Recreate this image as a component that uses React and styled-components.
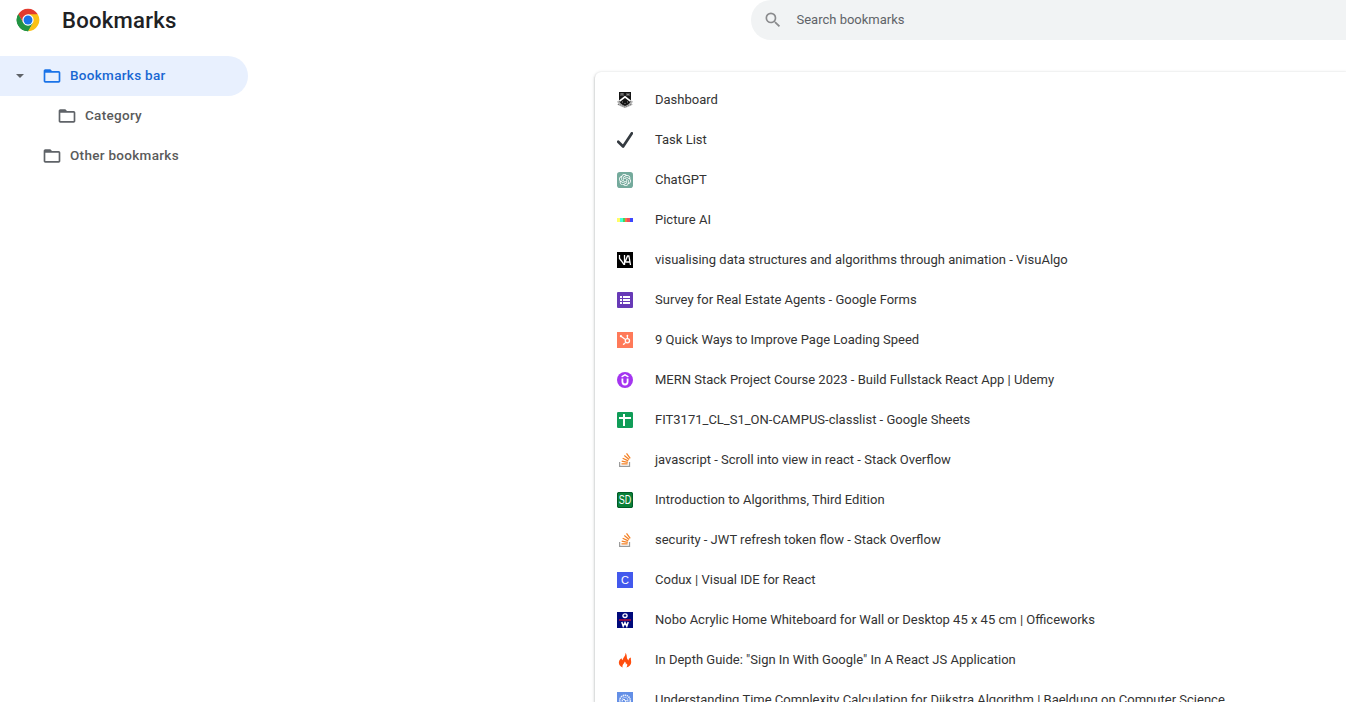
import React from 'react';
import styled, { createGlobalStyle } from 'styled-components';

const GlobalStyle = createGlobalStyle`
  * { box-sizing: border-box; }
  body {
    margin: 0;
    background: #fff;
    color: #202124;
    font-family: Roboto, "Liberation Sans", sans-serif;
    font-size: 13px;
    overflow: hidden;
  }
`;

const Page = styled.div`
  height: 702px;
  display: flex;
  flex-direction: column;
  overflow: hidden;
`;

const Toolbar = styled.header`
  flex: none;
  height: 56px;
  display: flex;
  align-items: flex-start;
`;

const Brand = styled.div`
  width: 751px;
  height: 40px;
  flex: none;
  display: flex;
  align-items: center;
  padding-left: 16px;
  gap: 22px;
`;

const Title = styled.h1`
  margin: 0;
  font-size: 22.1px;
  line-height: 40px;
  font-weight: 500;
  letter-spacing: 0.25px;
  color: #202124;
`;

const SearchField = styled.div`
  flex: 1;
  height: 40px;
  display: flex;
  align-items: center;
  gap: 13.5px;
  padding-left: 12px;
  border-radius: 20px 0 0 20px;
  background: #f1f3f4;
  color: #5f6368;
  line-height: 40px;
`;

const Main = styled.main`
  flex: 1;
  min-height: 0;
  display: flex;
`;

const Sidebar = styled.nav`
  width: 595px;
  flex: none;
`;

const Folder = styled.div`
  width: 248px;
  height: 40px;
  display: flex;
  align-items: center;
  padding-left: ${({ $depth }) => 10 + $depth * 15}px;
  border-radius: 0 20px 20px 0;
  background: ${({ $active }) => ($active ? '#e8f0fe' : 'transparent')};
  color: ${({ $active }) => ($active ? '#1a73e8' : '#5f6368')};
  font-weight: 500;
  font-size: 13.5px;
  letter-spacing: 0.3px;
  line-height: 38px;
`;

const Expander = styled.span`
  width: 32px;
  height: 20px;
  flex: none;
  color: #5f6368;
`;

const FolderName = styled.span`
  padding: 0 0 2px 8px;
  color: ${({ $active }) => ($active ? '#1967d2' : '#5a5a5a')};
`;

const Card = styled.section`
  flex: 1;
  margin-top: 16px;
  padding: 8px 0;
  border-radius: 6px 0 0 0;
  background: #fff;
  box-shadow: 0 1px 2px 0 rgba(60, 64, 67, 0.3), 0 1px 3px 1px rgba(60, 64, 67, 0.15);
`;

const Row = styled.div`
  height: 40px;
  display: flex;
  align-items: center;
  gap: 22px;
  padding-left: 22px;
  color: #333;
  white-space: nowrap;
`;

const RowTitle = styled.span`
  line-height: 40px;
`;

const Glyph = styled.svg`
  display: block;
  flex: none;
  overflow: hidden;
`;

const Icon = ({ size = 16, box = 16, children }) => (
  <Glyph width={size} height={size} viewBox={`0 0 ${box} ${box}`}>{children}</Glyph>
);

const ChromeLogo = () => (
  <Icon size={24} box={48}>
    <circle cx="24" cy="24" r="22.5" fill="#fff" />
    <path d="M24 24 4.5 12.7A22.5 22.5 0 0 1 43.5 12.7Z" fill="#e33b2e" />
    <path d="M4.5 12.7A22.5 22.5 0 0 0 24 46.5L33.7 29.6 24 24 14.3 29.6Z" fill="#229342" />
    <path d="M24 12.7H43.5A22.5 22.5 0 0 1 24 46.5L33.8 29.6Z" fill="#fbc116" />
    <path d="M4.5 12.7 14.3 29.6 24 24V12.7Z" fill="#e33b2e" />
    <path d="M4.5 12.7 14.3 29.6 24 35.3 33.7 29.6 24 46.5A22.5 22.5 0 0 1 4.5 12.7Z" fill="#229342" />
    <circle cx="24" cy="24" r="11.3" fill="#fff" />
    <circle cx="24" cy="24" r="8.9" fill="#1a73e8" />
  </Icon>
);

const FolderIcon = () => (
  <Icon size={20} box={24}>
    <path fill="currentColor" d="M20 6h-8l-2-2H4c-1.1 0-1.99.9-1.99 2L2 18c0 1.1.9 2 2 2h16c1.1 0 2-.9 2-2V8c0-1.1-.9-2-2-2zm0 12H4V8h16v10z" />
  </Icon>
);

const SearchIcon = () => (
  <Icon size={20} box={24}>
    <path fill="#8a8b8d" d="M15.5 14h-.79l-.28-.27A6.471 6.471 0 0 0 16 9.5 6.5 6.5 0 1 0 9.5 16c1.61 0 3.09-.59 4.23-1.57l.27.28v.79l5 4.99L20.49 19l-4.99-5zm-6 0C7.01 14 5 11.99 5 9.5S7.01 5 9.5 5 14 7.01 14 9.5 11.99 14 9.5 14z" />
  </Icon>
);

const Letters = ({ x = 8, y, size, weight = 400, fill = '#fff', width, children }) => (
  <text x={x} y={y} textAnchor="middle" fontFamily="Liberation Sans, sans-serif" fontSize={size} fontWeight={weight} fill={fill} textLength={width} lengthAdjust="spacingAndGlyphs">{children}</text>
);

const Crest = () => (
  <Icon>
    <path d="M0 9.5 2 8.5 4 11 8 13.5l4-2.5 2-2.5 2 1-1.5 2.5L16 12.5 12 14.5 8 16 4 14.5 0 12.5l1.5-.5Z" fill="#b5b5b5" />
    <path d="M2 0H14V8.5Q13 12 8 14 3 12 2 8.5Z" fill="#151515" />
    <path d="M3 1H7V4H3ZM9 1h4v3H9Z" fill="#4c4c4c" />
    <path d="M4 2h2M10 2.5h2" stroke="#8b8b8b" />
    <path d="m2.5 9.2 5.5-4.4 5.5 4.4" fill="none" stroke="#fff" strokeWidth="1.7" />
    <path d="M5 10h1M10 10h1M7.5 11.5h1" stroke="#999" />
    <path d="m1 12.4 3 .6 4 2.2 4-2.2 3-.6" fill="none" stroke="#666" strokeWidth=".8" strokeDasharray="1.2 1" />
  </Icon>
);

const Check = () => (
  <Icon><path d="m1.2 9.7 4.9 4.8L14.9 1.3" fill="none" stroke="#343a40" strokeWidth="2.7" strokeLinejoin="round" strokeLinecap="round" /></Icon>
);

const KNOT = 'M22.2819 9.8211a5.9847 5.9847 0 0 0-.5157-4.9108 6.0462 6.0462 0 0 0-6.5098-2.9A6.0651 6.0651 0 0 0 4.9807 4.1818a5.9847 5.9847 0 0 0-3.9977 2.9 6.0462 6.0462 0 0 0 .7427 7.0966 5.98 5.98 0 0 0 .511 4.9107 6.051 6.051 0 0 0 6.5146 2.9001A5.9847 5.9847 0 0 0 13.2599 24a6.0557 6.0557 0 0 0 5.7718-4.2058 5.9894 5.9894 0 0 0 3.9977-2.9001 6.0557 6.0557 0 0 0-.7475-7.0729zm-9.022 12.6081a4.4755 4.4755 0 0 1-2.8764-1.0408l.1419-.0804 4.7783-2.7582a.7948.7948 0 0 0 .3927-.6813v-6.7369l2.02 1.1686a.071.071 0 0 1 .038.052v5.5826a4.504 4.504 0 0 1-4.4945 4.4944zm-9.6607-4.1254a4.4708 4.4708 0 0 1-.5346-3.0137l.142.0852 4.783 2.7582a.7712.7712 0 0 0 .7806 0l5.8428-3.3685v2.3324a.0804.0804 0 0 1-.0332.0615L9.74 19.9502a4.4992 4.4992 0 0 1-6.1408-1.6464zM2.3408 7.8956a4.485 4.485 0 0 1 2.3655-1.9728V11.6a.7664.7664 0 0 0 .3879.6765l5.8144 3.3543-2.0201 1.1685a.0757.0757 0 0 1-.071 0l-4.8303-2.7865A4.504 4.504 0 0 1 2.3408 7.872zm16.5963 3.8558L13.1038 8.364 15.1192 7.2a.0757.0757 0 0 1 .071 0l4.8303 2.7913a4.4944 4.4944 0 0 1-.6765 8.1042v-5.6772a.79.79 0 0 0-.407-.667zm2.0107-3.0231l-.142-.0852-4.7735-2.7818a.7759.7759 0 0 0-.7854 0L9.409 9.2297V6.8974a.0662.0662 0 0 1 .0284-.0615l4.8303-2.7866a4.4992 4.4992 0 0 1 6.6802 4.66zM8.3065 12.863l-2.02-1.1638a.0804.0804 0 0 1-.038-.0567V6.0742a4.4992 4.4992 0 0 1 7.3757-3.4537l-.142.0805L8.704 5.459a.7948.7948 0 0 0-.3927.6813zm1.0976-2.3654l2.602-1.4998 2.6069 1.4998v2.9994l-2.5974 1.4997-2.6067-1.4997Z';

const Knot = () => (
  <Icon>
    <rect width="16" height="16" rx="2.8" fill="#74aa9c" />
    <path d={KNOT} transform="translate(2 2) scale(.5)" fill="#fff" />
  </Icon>
);

const Spectrum = () => (
  <Icon>
    {['#ffff67', '#43ffd9', '#46d65a', '#ff7043', '#ed4b62', '#3c46ff'].map((fill, i) => (
      <rect key={fill} x={[0, 3, 6, 8, 10, 13][i]} y="6" width={[3, 3, 2, 2, 3, 3][i]} height="4" fill={fill} />
    ))}
  </Icon>
);

const VisuAlgo = () => (
  <Icon>
    <rect width="16" height="16" />
    <path d="M2.5 3v3.5l2 2.5 2.5 3.7M7.5 3v10M7.5 11.5l3-7.5h1.4l1.6 9M8.8 10H13" fill="none" stroke="#fff" strokeWidth="1.3" />
  </Icon>
);

const Forms = () => (
  <Icon>
    <rect width="16" height="16" rx="1" fill="#673ab7" />
    <path d="M3 4h2v2H3zm3 0h7v2H6zM3 7h2v2H3zm3 0h7v2H6zm-3 3h2v2H3zm3 0h7v2H6z" fill="#fff" />
  </Icon>
);

const HubSpot = () => (
  <Icon>
    <rect width="16" height="16" fill="#ff7a59" />
    <path d="m4 4.2 4 3.1M10.4 3.8v3M8.8 10.3 6.8 12.2" stroke="#fff" strokeWidth="1.1" />
    <circle cx="10.4" cy="8.8" r="2.1" fill="none" stroke="#fff" strokeWidth="1.3" />
    <circle cx="3.9" cy="4.2" r="1.1" fill="#fff" /><circle cx="10.4" cy="3.7" r=".9" fill="#fff" /><circle cx="6.6" cy="12.3" r=".8" fill="#fff" />
  </Icon>
);

const Udemy = () => (
  <Icon>
    <circle cx="8" cy="8" r="8" fill="#a435f0" />
    <path d="M4.6 4.8 8 2.8l3.4 2" fill="none" stroke="#fff" strokeWidth="1.4" />
    <path d="M5.4 6.6v3.2q0 2.7 2.6 2.7t2.6-2.7V6.6" fill="none" stroke="#fff" strokeWidth="1.8" />
  </Icon>
);

const Sheets = () => (
  <Icon>
    <rect width="16" height="16" rx="1.3" fill="#109d58" />
    <path d="M2 5h12v2H2zM6 2h2v12H6z" fill="#fff" />
  </Icon>
);

const StackOverflow = () => (
  <Icon>
    <g transform="translate(.9 1.1) scale(.58)">
      <path fill="#f48024" d="M15.725 0l-1.72 1.277 6.39 8.588 1.716-1.277L15.725 0zm-3.94 3.418l-1.369 1.644 8.225 6.85 1.369-1.644-8.225-6.85zm-3.15 4.465l-.905 1.94 9.702 4.517.904-1.94-9.701-4.517zm-1.85 4.86l-.44 2.093 10.473 2.201.44-2.092-10.473-2.203zM6.154 17.603v2.13h10.66v-2.13Z" />
      <path fill="#9b9b9b" d="M1.89 15.47V24h19.19v-8.53h-2.133v6.397H4.021v-6.396H1.89z" />
    </g>
  </Icon>
);

const ScienceDirect = () => (
  <Icon>
    <rect width="16" height="16" rx="2" fill="#0a7f38" />
    <rect x=".5" y=".5" width="15" height="15" rx="1.5" fill="none" stroke="#005b27" />
    <Letters y={12.3} size={12} width={12.4}>SD</Letters>
  </Icon>
);

const Codux = () => (
  <Icon><rect width="16" height="16" fill="#4359ed" /><Letters y={12} size={11}>C</Letters></Icon>
);

const Officeworks = () => (
  <Icon>
    <rect width="16" height="16" fill="#00097b" />
    <ellipse cx="8" cy="3.7" rx="2.1" ry="1.8" fill="none" stroke="#fff" strokeWidth="1.3" />
    <path d="M2 8h12" stroke="#d5142f" strokeWidth="1.3" />
    <path d="m4.8 10 1.4 4.2L8 10.7l1.8 3.5L11.2 10" fill="none" stroke="#fff" strokeWidth="1.5" />
  </Icon>
);

const Flame = () => (
  <Icon>
    <path d="M8.4.8C8.9 4 6.2 5.2 5.6 8.2 4.9 7.7 4.6 7 4.6 6.2 2.5 7.6 1.6 9.4 1.9 11.3c.3 2 1.7 3.5 3.8 4.1-.9-2.7 1.5-3.5 2.1-5.9 1.1 1 1.2 2 .9 3 .6-.2 1-.7 1.1-1.3.8 1.5.5 2.9-.4 4.2 2.9-.6 4.8-2.6 4.8-5.2 0-1.6-.6-2.7-.2-4.7-1.6.4-2.4 1.4-2.4 2.9C8.8 6.6 10.7 3.2 8.4.8Z" fill="#ff4d0d" />
  </Icon>
);

const Baeldung = () => (
  <Icon>
    <rect width="16" height="16" fill="#638fe6" />
    <circle cx="8" cy="8.6" r="5.3" fill="none" stroke="#e8effd" strokeWidth="1.6" strokeDasharray="1.4 .6" />
    <circle cx="8" cy="8.6" r="3.2" fill="none" stroke="#b9cdf6" strokeWidth=".9" />
    <path d="m5 9 2-2 2 2 2-1M7 7l3 5" fill="none" stroke="#fff" strokeWidth=".8" />
  </Icon>
);

const bookmarks = [
  [Crest, 'Dashboard'],
  [Check, 'Task List'],
  [Knot, 'ChatGPT'],
  [Spectrum, 'Picture AI'],
  [VisuAlgo, 'visualising data structures and algorithms through animation - VisuAlgo'],
  [Forms, 'Survey for Real Estate Agents - Google Forms'],
  [HubSpot, '9 Quick Ways to Improve Page Loading Speed'],
  [Udemy, 'MERN Stack Project Course 2023 - Build Fullstack React App | Udemy'],
  [Sheets, 'FIT3171_CL_S1_ON-CAMPUS-classlist - Google Sheets'],
  [StackOverflow, 'javascript - Scroll into view in react - Stack Overflow'],
  [ScienceDirect, 'Introduction to Algorithms, Third Edition'],
  [StackOverflow, 'security - JWT refresh token flow - Stack Overflow'],
  [Codux, 'Codux | Visual IDE for React'],
  [Officeworks, 'Nobo Acrylic Home Whiteboard for Wall or Desktop 45 x 45 cm | Officeworks'],
  [Flame, 'In Depth Guide: "Sign In With Google" In A React JS Application'],
  [Baeldung, 'Understanding Time Complexity Calculation for Dijkstra Algorithm | Baeldung on Computer Science'],
];

const folders = [
  { name: 'Bookmarks bar', depth: 0, active: true },
  { name: 'Category', depth: 1 },
  { name: 'Other bookmarks', depth: 0 },
];

export default function App() {
  return (
    <Page>
      <GlobalStyle />
      <Toolbar>
        <Brand><ChromeLogo /><Title>Bookmarks</Title></Brand>
        <SearchField><SearchIcon />Search bookmarks</SearchField>
      </Toolbar>
      <Main>
        <Sidebar>
          {folders.map(({ name, depth, active }) => (
            <Folder key={name} $depth={depth} $active={active}>
              <Expander>{active && <Icon size={20} box={20}><path d="M6 8h8l-4 4Z" fill="currentColor" /></Icon>}</Expander>
              <FolderIcon />
              <FolderName $active={active}>{name}</FolderName>
            </Folder>
          ))}
        </Sidebar>
        <Card>
          {bookmarks.map(([Favicon, title]) => (
            <Row key={title}><Favicon /><RowTitle>{title}</RowTitle></Row>
          ))}
        </Card>
      </Main>
    </Page>
  );
}
